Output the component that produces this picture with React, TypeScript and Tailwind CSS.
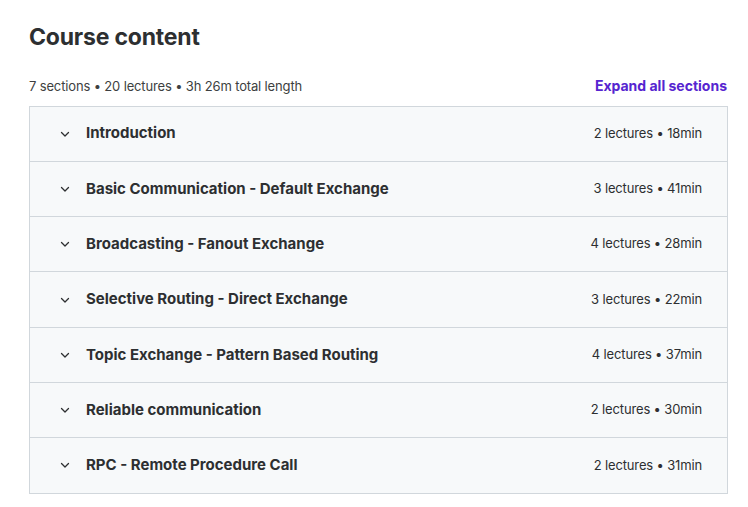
const sections = [
  { title: "Introduction", lectures: 2, length: "18min" },
  { title: "Basic Communication - Default Exchange", lectures: 3, length: "41min" },
  { title: "Broadcasting - Fanout Exchange", lectures: 4, length: "28min" },
  { title: "Selective Routing - Direct Exchange", lectures: 3, length: "22min" },
  { title: "Topic Exchange - Pattern Based Routing", lectures: 4, length: "37min" },
  { title: "Reliable communication", lectures: 2, length: "30min" },
  { title: "RPC - Remote Procedure Call", lectures: 2, length: "31min" },
];

function Chevron() {
  return (
    <svg width="10" height="10" viewBox="0 0 10 10" className="shrink-0 text-[#2d2f31]">
      <path d="M1.5 3.5 L5 7 L8.5 3.5" fill="none" stroke="currentColor" strokeWidth="1.3" strokeLinecap="round" strokeLinejoin="round" />
    </svg>
  );
}

export default function App() {
  return (
    <div className="h-[507px] w-[748px] bg-white font-['Inter',sans-serif] text-[#2d2f31]">
      <div className="pl-[29px] pr-[20px] pt-[22px]">
        <h2 className="text-[23px] font-bold leading-[30px] tracking-[-0.2px]">Course content</h2>
        <div className="mt-[25px] flex items-center justify-between">
          <span className="text-[13px] tracking-[-0.15px] text-[#3d3f41]">7 sections • 20 lectures • 3h 26m total length</span>
          <button className="-mt-[2px] pr-[1px] text-[14px] font-bold text-[#5624d0]">Expand all sections</button>
        </div>
        <div className="mt-[9px] border-x border-b border-[#d1d7dc]">
          {sections.map((s) => (
            <div
              key={s.title}
              className="flex h-[55.3px] items-center border-t border-[#d1d7dc] bg-[#f7f9fa] pl-[30px] pr-[25px]"
            >
              <Chevron />
              <span className="ml-[16px] flex-1 text-[15px] font-bold">{s.title}</span>
              <span className="text-[13px] tracking-[-0.15px] text-[#2d2f31]">
                {s.lectures} lectures • {s.length}
              </span>
            </div>
          ))}
        </div>
      </div>
    </div>
  );
}
